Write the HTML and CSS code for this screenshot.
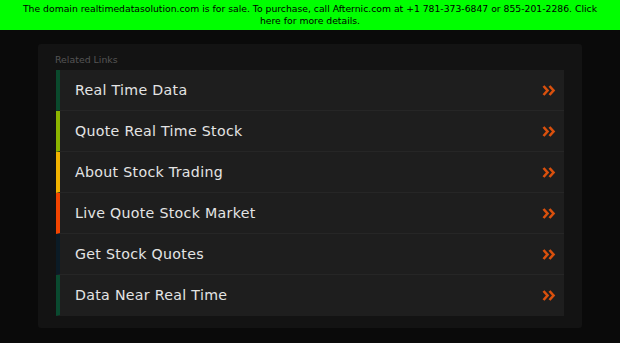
FILE: index.html
```html
<!DOCTYPE html>
<html lang="en">
<head>
<meta charset="utf-8">
<title>realtimedatasolution.com</title>
<link rel="stylesheet" href="styles.css">
</head>
<body>
<div class="sale-bar">
  <a class="sale-link" href="#">The domain realtimedatasolution.com is for sale. To purchase, call Afternic.com at +1 781-373-6847 or 855-201-2286. Click here for more details.</a>
</div>
<main class="page">
  <section class="panel">
    <h2 class="panel-title">Related Links</h2>
    <ul class="links">
      <li class="link c1"><span class="label">Real Time Data</span><svg class="chev" viewBox="0 0 14 11" width="14" height="11"><path d="M1.5 1 L5.5 5.5 L1.5 10 M7.5 1 L11.5 5.5 L7.5 10" fill="none" stroke="currentColor" stroke-width="2.6"/></svg></li>
      <li class="link c2"><span class="label">Quote Real Time Stock</span><svg class="chev" viewBox="0 0 14 11" width="14" height="11"><path d="M1.5 1 L5.5 5.5 L1.5 10 M7.5 1 L11.5 5.5 L7.5 10" fill="none" stroke="currentColor" stroke-width="2.6"/></svg></li>
      <li class="link c3"><span class="label">About Stock Trading</span><svg class="chev" viewBox="0 0 14 11" width="14" height="11"><path d="M1.5 1 L5.5 5.5 L1.5 10 M7.5 1 L11.5 5.5 L7.5 10" fill="none" stroke="currentColor" stroke-width="2.6"/></svg></li>
      <li class="link c4"><span class="label">Live Quote Stock Market</span><svg class="chev" viewBox="0 0 14 11" width="14" height="11"><path d="M1.5 1 L5.5 5.5 L1.5 10 M7.5 1 L11.5 5.5 L7.5 10" fill="none" stroke="currentColor" stroke-width="2.6"/></svg></li>
      <li class="link c5"><span class="label">Get Stock Quotes</span><svg class="chev" viewBox="0 0 14 11" width="14" height="11"><path d="M1.5 1 L5.5 5.5 L1.5 10 M7.5 1 L11.5 5.5 L7.5 10" fill="none" stroke="currentColor" stroke-width="2.6"/></svg></li>
      <li class="link c6"><span class="label">Data Near Real Time</span><svg class="chev" viewBox="0 0 14 11" width="14" height="11"><path d="M1.5 1 L5.5 5.5 L1.5 10 M7.5 1 L11.5 5.5 L7.5 10" fill="none" stroke="currentColor" stroke-width="2.6"/></svg></li>
    </ul>
  </section>
</main>
</body>
</html>
```
FILE: styles.css
```css
html, body {
  margin: 0;
  padding: 0;
}
body {
  background: #0a0a0a;
  font-family: "DejaVu Sans", Verdana, sans-serif;
}
.sale-bar {
  background: #00ff00;
  height: 30px;
  box-sizing: border-box;
  padding: 3px 20px 0;
  text-align: center;
  font-size: 9.25px;
  line-height: 12px;
}
.sale-link {
  color: #000;
  text-decoration: none;
}
.page {
  display: flex;
  justify-content: center;
  padding-top: 14px;
}
.panel {
  width: 544px;
  box-sizing: border-box;
  background: #131313;
  border-radius: 3px;
  padding: 7px 18px 12px;
}
.panel-title {
  margin: 0 0 2px -1px;
  font-weight: normal;
  font-size: 9.4px;
  line-height: 17px;
  color: #555;
}
.links {
  list-style: none;
  margin: 0;
  padding: 0;
}
.link {
  display: flex;
  align-items: center;
  justify-content: space-between;
  height: 40px;
  border-bottom: 1px solid #262626;
  border-left: 4px solid #0b4a2e;
  background: #1e1e1e;
  padding: 0 8px 0 15px;
}
.link:last-child {
  border-bottom: 1px solid #1e1e1e;
}
.label {
  color: #e4e4e4;
  font-size: 14.2px;
  letter-spacing: 0.3px;
}
.chev {
  color: #d9500d;
  display: block;
}
.c1 { border-left-color: #0a4a2d; }
.c2 { border-left-color: #8cb400; }
.c3 { border-left-color: #f2b300; }
.c4 { border-left-color: #f24400; }
.c5 { border-left-color: #0b1b26; }
.c6 { border-left-color: #0a4a30; }
```
